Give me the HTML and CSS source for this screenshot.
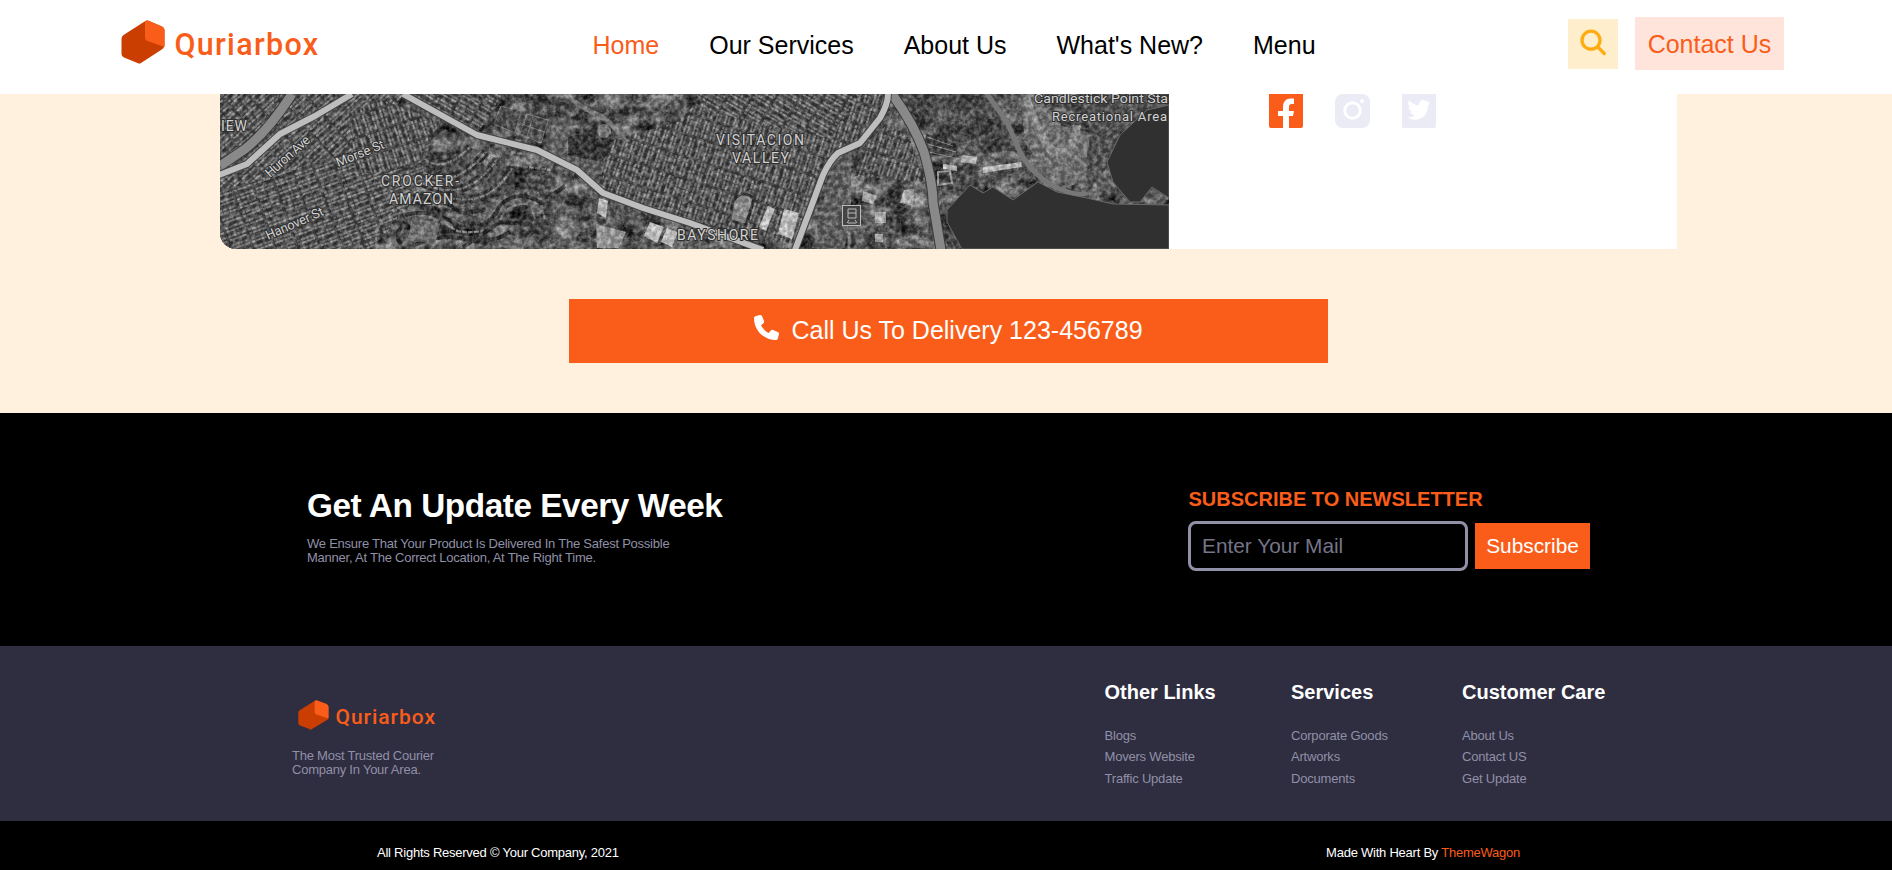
FILE: index.html
```html
<!DOCTYPE html>
<html lang="en">
<head>
<meta charset="utf-8">
<title>Quriarbox</title>
<link rel="stylesheet" href="styles.css">
</head>
<body>
<header class="header">
  <svg class="logo" viewBox="0 0 198 44" width="198" height="44">
    <path d="M24 1.2Q25.500 0 27.500 .8L41 6.500Q43.500 7.500 43.500 10V25Q43.500 27.500 41.500 29L20 43Q18.500 44 16.500 43L3 37.500Q.5 36.500.5 34V18.500Q.5 16.500 2.500 15Z" fill="#cb3e02"/>
    <path d="M24 1.500Q25.500 0 27.500.8L41 6.500Q43.500 7.500 43.500 10V27L26.500 21Q24 20 24 17.500Z" fill="#fa5d19"/>
    <text class="wordmark" x="53.500" y="34.500" font-size="30.500" textLength="143.500" lengthAdjust="spacing">Quriarbox</text>
  </svg>
  <nav class="nav">
    <a class="active">Home</a><a>Our Services</a><a>About Us</a><a>What's New?</a><a>Menu</a>
  </nav>
  <div class="search">
    <svg viewBox="0 0 50 50" width="50" height="50" fill="none" stroke="#ffac12" stroke-width="3.300" stroke-linecap="round"><circle cx="23" cy="21.200" r="9"/><path d="M29.800 28L36.300 34.500"/></svg>
  </div>
  <a class="contact">Contact Us</a>
</header>
<main class="delivery">
  <section class="location">
    <svg class="map" viewBox="0 0 949 155" width="949" height="155">
      <defs>
        <pattern id="blocks" width="21" height="9" patternUnits="userSpaceOnUse"><rect width="21" height="9" fill="#3c3c3c"/><path d="M1 2.500H19M1 6H19" stroke="#929292" stroke-width="2" stroke-dasharray="3 .7 5 1"/><path d="M20 0V9" stroke="#555"/></pattern>
        <pattern id="g1" href="#blocks" patternTransform="rotate(-42)"/>
        <pattern id="g2" href="#blocks" patternTransform="rotate(-20)"/>
        <pattern id="g3" href="#blocks" patternTransform="rotate(72)"/>
        <pattern id="g4" href="#blocks" patternTransform="rotate(108)"/>
        <pattern id="g5" href="#blocks" patternTransform="rotate(30)"/>
        <filter id="terrain" x="0" y="0" width="100%" height="100%" color-interpolation-filters="sRGB"><feTurbulence type="fractalNoise" baseFrequency=".045 .07" numOctaves="5" seed="8"/><feColorMatrix values="1 0 0 0 -.17 1 0 0 0 -.17 1 0 0 0 -.17 0 0 0 0 1"/></filter>
        <filter id="grain" x="0" y="0" width="100%" height="100%" color-interpolation-filters="sRGB"><feTurbulence type="fractalNoise" baseFrequency=".22" numOctaves="3" seed="4"/><feColorMatrix values="2.200 0 0 0 -.75 2.200 0 0 0 -.75 2.200 0 0 0 -.75 0 0 0 0 .28"/></filter>
        <filter id="soft"><feGaussianBlur stdDeviation=".4"/></filter>
      </defs>
      <rect width="949" height="155" filter="url(#terrain)"/>
      <g filter="url(#soft)">
        <path d="M0 0H185L110 95L0 145Z" fill="url(#g1)"/>
        <path d="M0 98L150 52L212 33L205 80L185 120L150 155H0Z" fill="url(#g2)"/>
        <path d="M130 20L160 5L220 28L195 72L135 82Z" fill="url(#g3)"/>
        <path d="M183 0H283L257 40L238 35Z" fill="url(#g5)"/>
        <path d="M385 48L458 28L476 10L542 0H668L637 48L610 65L575 150L465 125L382 98Z" fill="url(#g4)"/>
        <path d="M476 0H640L610 45L488 18Z" fill="url(#g5)"/>
        <path d="M645 50L668 30L690 45L704 88L635 82Z" fill="url(#g4)"/>
        <g fill="none" stroke="#343434" stroke-width="8"><path d="M205 65Q223 80 250 53M203 78Q232 98 266 58M202 89Q246 111 277 65M230 104Q270 113 292 74"/></g>
        <g fill="none" stroke="#888" stroke-width="2.200" stroke-dasharray="5 1"><path d="M205 65Q223 80 250 53M203 78Q232 98 266 58M202 89Q246 111 277 65M230 104Q270 113 292 74M180 116Q213 120 237 137Q274 143 284 118Q303 102 323 118M182 112Q150 130 157 154M206 110Q240 114 263 124M291 58L335 66L330 76L287 70M318 98L325 125M308 98L315 125"/></g>
        <g fill="none" stroke="#292929" stroke-width="4"><path d="M177 123Q213 112 238 132Q269 138 280 111Q300 94 321 109L345 92M182 151Q172 142 185 128M243 153L280 128L310 130L321 146M212 101L242 119L266 116M195 151Q220 139 245 145T290 138"/></g>
        <path d="M192 122L220 130L215 150L188 146Z" fill="#777"/>
        <g fill="#4a4a4a" stroke="#858585"><path d="M281 12L301 17L295 39L274 30ZM307 20L328 26L321 49L300 40ZM313 23L307 42M304 31L325 38"/></g>
        <path d="M326 32L350 20L356 40L389 49L382 81L352 73L327 57Z" fill="#666"/>
        <path d="M348 43L390 32L394 50L382 68L348 61Z" fill="#2b2b2b"/>
        <circle cx="384" cy="37" r="7" fill="#858585"/>
        <path d="M345 0Q365 17 381 22Q396 33 406 48" fill="none" stroke="#828282" stroke-width="5"/>
        <path d="M392 104L411 111L407 130L386 121Z" fill="#555"/><path d="M379 104L388 107L386 124L377 119Z" fill="#ddd"/>
        <path d="M376 130L406 138L399 154H377Z" fill="#aaa"/><path d="M430 128L444 133L437 149L424 142Z" fill="#ddd"/><path d="M447 134L458 138L452 153L441 148Z" fill="#e0e0e0"/>
        <path d="M513 107Q523 94 534 105L526 131L510 127Z" fill="#999" stroke="#333" stroke-width="3"/><path d="M548 112L555 115L546 137L539 133Z" fill="#ddd"/><path d="M564 115L579 119L572 145L558 140Z" fill="#ddd"/>
        <path d="M614 62L632 59L625 154H592Z" fill="#606060"/><path d="M630 53L629 155" stroke="#777" stroke-width="3"/>
        <path d="M643 97L657 102L653 110L642 107ZM655 118H666V129H655ZM684 96L694 95L693 111L680 109ZM655 140H663V148H655Z" fill="#c5c5c5"/>
        <path d="M672 0H767L787 28L800 58L760 55L720 42L704 25Z" fill="#353535" opacity=".55"/>
        <path d="M742 61L757 63L756 70L741 68ZM723 70L737 72V77L723 75ZM763 73L801 68L802 73L763 79Z" fill="#d0d0d0"/>
        <path d="M718 78L730 77L732 89L718 91Z" fill="#333" stroke="#aaa" stroke-width="2"/>
        <path d="M800 0L820 5L842 32L868 38L866 88L848 92L824 78L805 48Z" fill="#777"/><path d="M806 3Q817 37 830 55Q852 68 857 31" fill="none" stroke="#999" stroke-width="8"/>
        <path d="M706 40L732 48L740 64L704 60Z" fill="#373737"/><path d="M707 43L733 52M708 50L736 58M709 58L735 64" stroke="#999"/>
        <path d="M870 0H949V11L910 30L888 50L887 73L868 98Z" fill="#505050"/>
      </g>
      <rect width="949" height="155" filter="url(#grain)"/>
      <path d="M742 155L727 128V116L750 91L763 99L773 93L793 106L818 88L837 98L867 104L893 110L949 111V155ZM949 11L927 16L900 41L887 68L893 88L910 108H920L932 93L949 104Z" fill="#303030" stroke="#686868"/>
      <g fill="none" stroke-linejoin="round">
        <path d="M867 98Q863 104 837 94Q812 81 800 58L787 28L767 0" stroke="#777" stroke-width="5"/>
        <path d="M0 72L25 55Q48 37 72 0M672 0Q694 30 704 58Q713 90 713 108L721 156" stroke="#3a3a3a" stroke-width="11"/>
        <path d="M0 72L25 55Q48 37 72 0M672 0Q694 30 704 58Q713 90 713 108L721 156" stroke="#898989" stroke-width="9"/>
        <path d="M-1 81L27 70L60 40L95 22L132 0M183 0L257 41L317 56L357 76L383 99L423 114L470 129L543 156M668 0Q668 10 660 24L640 49L618 59Q610 66 603 81L587 124L575 156" stroke="#444" stroke-width="8"/>
        <path d="M-1 81L27 70L60 40L95 22L132 0M183 0L257 41L317 56L357 76L383 99L423 114L470 129L543 156M668 0Q668 10 660 24L640 49L618 59Q610 66 603 81L587 124L575 156" stroke="#bebebe" stroke-width="6"/>
      </g>
      <g class="place">
        <text x="1" y="37" textLength="26">IEW</text>
        <text x="457" y="146" textLength="81">BAYSHORE</text>
        <text x="161" y="92" textLength="78">CROCKER-</text><text x="169" y="110" textLength="64">AMAZON</text>
        <text x="496" y="51" textLength="88">VISITACION</text><text x="512" y="69" textLength="57">VALLEY</text>
      </g>
      <g class="street">
        <text transform="translate(50 84) rotate(-42)" textLength="55">Huron Ave</text>
        <text transform="translate(118 73) rotate(-22)" textLength="51">Morse St</text>
        <text transform="translate(48 146) rotate(-24)" textLength="62">Hanover St</text>
        <text x="814" y="9" textLength="134" lengthAdjust="spacingAndGlyphs">Candlestick Point Sta</text><text x="832" y="27" textLength="115">Recreational Area</text>
      </g>
      <g fill="#444" stroke="#bbb"><rect x="622.500" y="111.500" width="18" height="20"/><path d="M628 115H636V124H628ZM628 119H636M628 129H636M629 126L627 129M635 126L637 129"/></g>
    </svg>
    <div class="social">
      <svg viewBox="0 0 34 34" width="34" height="34"><rect y="-5" width="34" height="39" rx="2" fill="#fa5d19"/><path d="M14 34V22H9V17H14V13C14 7.500 17 4.500 22 4.500H25V10H22.500Q20 10 20 13V17H25L24 22H20V34Z" fill="#fff"/></svg>
      <svg viewBox="0 0 35 34" width="35" height="34"><rect width="35" height="34" rx="8" fill="#ebebf5"/><circle cx="17.500" cy="16.500" r="7.800" fill="none" stroke="#fff" stroke-width="3"/><circle cx="27" cy="7" r="2" fill="#fff"/></svg>
      <svg viewBox="0 0 34 34" width="34" height="34"><rect y="-5" width="34" height="39" rx="2" fill="#ebebf5"/><path d="M28 8.200L25.500 9L27.500 6.500L24.500 7.700C21 4.200 16.500 7 17.200 11.300C13 11.100 9.500 9.200 7 6.200C5.500 9 6.300 11.500 8.500 13L6.400 12.400C6.500 15 8 17 10.400 17.700H8.300C9 20 10.700 21 12.800 21.200C10.700 23 8.300 23.600 5.700 23.400C14.500 29 26 24 25.800 12.300Z" fill="#fff"/></svg>
    </div>
  </section>
  <a class="call">
    <svg viewBox="0 0 512 512" width="25" height="25" fill="#fff"><path d="M165 25C157 6 136-5 116 1L28 25C11 30 0 46 0 64C0 311 201 512 448 512C466 512 482 501 487 484L511 396C517 376 506 355 487 347L391 307C374 300 355 305 344 319L304 368C233 335 177 279 144 208L193 168C207 157 212 138 205 121Z"/></svg>
    <span>Call Us To Delivery 123-456789</span>
  </a>
</main>
<section class="newsletter">
  <div class="pitch">
    <h2>Get An Update Every Week</h2>
    <p>We Ensure That Your Product Is Delivered In The Safest Possible<br>Manner, At The Correct Location, At The Right Time.</p>
  </div>
  <div class="signup">
    <h3>SUBSCRIBE TO NEWSLETTER</h3>
    <form class="form"><input type="email" placeholder="Enter Your Mail"><button type="button">Subscribe</button></form>
  </div>
</section>
<footer class="footer">
  <div class="about">
    <svg class="footer-logo" viewBox="0 0 138 30" width="138" height="30">
      <path d="M17 .8Q18 0 19 .5L28.500 4Q30.500 5 30.500 7V17.500Q30.500 19 29 20L14 29Q13 30 11.500 29L2 25.500Q.3 24.500.3 23V12.500Q.3 11 2 10Z" fill="#cb3e02"/>
      <path d="M16.700 1Q18 0 19 .5L28.500 4Q30.500 5 30.500 7V18.500L18.500 14.500Q16.700 14 16.700 12Z" fill="#fa5d19"/>
      <text class="wordmark" x="37.500" y="23.500" font-size="21" textLength="99.500" lengthAdjust="spacing">Quriarbox</text>
    </svg>
    <p>The Most Trusted Courier<br>Company In Your Area.</p>
  </div>
  <div class="links">
    <div><h3>Other Links</h3><a>Blogs</a><a>Movers Website</a><a>Traffic Update</a></div>
    <div><h3>Services</h3><a>Corporate Goods</a><a>Artworks</a><a>Documents</a></div>
    <div><h3>Customer Care</h3><a>About Us</a><a>Contact US</a><a>Get Update</a></div>
  </div>
</footer>
<div class="legal">
  <span>All Rights Reserved © Your Company, 2021</span>
  <span>Made With Heart By <a>ThemeWagon</a></span>
</div>
</body>
</html>
```
FILE: styles.css
```css
* { box-sizing: border-box; margin: 0; padding: 0; }
html, body { height: 870px; overflow: hidden; }
body { font-family: "Liberation Sans", Arial, sans-serif; font-size: 13px; background: #000; }
svg { display: block; flex: none; }

.header { height: 94px; display: flex; align-items: flex-start; background: #fff; padding: 0 108px 0 121px; font-size: 25px; }
.logo { margin-top: 20px; }
.wordmark { font-family: Roboto, sans-serif; font-weight: 500; fill: #fa5d19; }
.nav { display: flex; gap: 50px; margin: 31px auto 0 273.500px; line-height: 28px; white-space: nowrap; }
.nav .active { color: #fa5d19; }
.search { width: 50px; height: 50px; margin: 19px 17px 0 0; background: #ffeecb; }
.contact { width: 149px; height: 53px; margin-top: 17px; padding-top: 12.500px; line-height: 28px; text-align: center; background: #ffe4db; color: #fa5d19; }

.delivery { height: 319px; background: #fff1de; }
.location { width: 1457px; height: 155px; margin-left: 220px; display: flex; background: linear-gradient(#fff, #fff) 100% 0 / 508px 100% no-repeat; }
.map { border-radius: 0 0 0 16px; }
.place, .street { fill: #d2d2d2; stroke: #303030; stroke-width: 2px; paint-order: stroke; font-family: Roboto, sans-serif; font-size: 14px; }
.street { font-size: 13px; }
.social { display: flex; gap: 32px; padding-left: 100px; }
.call { width: 759px; height: 64px; margin: 50px 0 0 569px; display: flex; justify-content: center; gap: 12px; background: #fa5d19; color: #fff; font-size: 25px; line-height: 28px; white-space: nowrap; }
.call svg { margin-top: 16px; }
.call span { margin-top: 17px; }

.newsletter { height: 233px; display: flex; justify-content: space-between; padding: 72px 301px 0 307px; background: #000; }
.pitch h2 { color: #fff; font-size: 33.330px; line-height: 42px; letter-spacing: -.44px; white-space: nowrap; }
.pitch p { margin-top: 10px; }
.pitch p, .about p { color: #9090a7; line-height: 14px; letter-spacing: -.235px; white-space: nowrap; }
.signup { width: 402.500px; padding-top: 2px; }
.signup h3 { color: #fa5d19; font-size: 20px; line-height: 24px; }
.form { display: flex; align-items: center; gap: 7px; margin: 10px 0 0 -.5px; }
.form input { width: 280px; height: 50px; border: 3px solid #9090a7; border-radius: 8px; background: #000; padding: 0 10px 0 11px; font: 20.830px "Liberation Sans", Arial, sans-serif; }
.form input::placeholder { color: #757589; opacity: 1; }
.form button { width: 115px; height: 46px; border: 0; background: #fa5d19; color: #fff; font: 20.830px "Liberation Sans", Arial, sans-serif; }

.footer { height: 175px; display: flex; justify-content: space-between; padding: 0 286.500px 0 292px; background: #2f2d40; }
.footer-logo { margin: 54px 0 19px 6px; }
.links { display: flex; padding-top: 34px; color: #9090a7; }
.links > div { display: flex; flex-direction: column; width: 186.500px; }
.links > div:nth-child(2) { width: 171px; }
.links > div:nth-child(3) { width: 143.500px; }
.links h3 { color: #fff; font-size: 20px; line-height: 24px; margin-bottom: 21px; white-space: nowrap; }
.links a { line-height: 21.300px; letter-spacing: -.2px; }
.legal { height: 49px; display: flex; justify-content: space-between; padding: 24px 372px 0 377px; background: #000; color: #fff; line-height: 15px; letter-spacing: -.24px; }
.legal a { color: #fa5d19; }
```
